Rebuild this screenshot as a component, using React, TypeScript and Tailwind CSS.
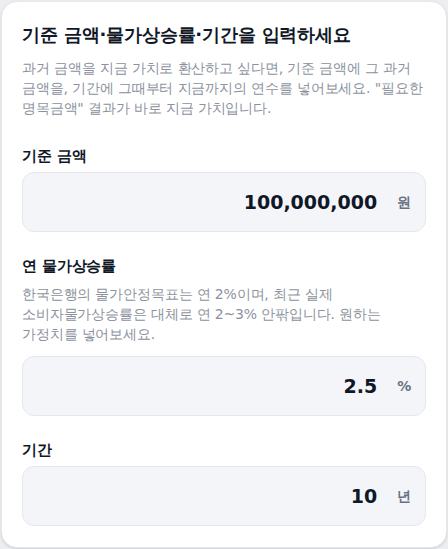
const font = { fontFamily: '"DejaVu Sans", sans-serif' };

type FieldProps = {
  label: string;
  hint?: string;
  value: string;
  unit: string;
};

function Field({ label, hint, value, unit }: FieldProps) {
  return (
    <div className="flex flex-col">
      <label className="text-[15px] leading-5 font-bold text-gray-900">{label}</label>
      {hint ? (
        <p className="mt-2 mb-3 text-[14px] leading-5 text-[#8b929d] break-keep pr-10">{hint}</p>
      ) : (
        <div className="h-1.5" />
      )}
      <div className="flex h-[60px] items-center justify-end gap-5 rounded-xl border border-gray-200 bg-[#f4f5f9] pr-[14px]">
        <span className="text-[19px] font-bold tracking-normal text-gray-900">{value}</span>
        <span className="text-[14px] font-semibold text-gray-500">{unit}</span>
      </div>
    </div>
  );
}

export default function App() {
  return (
    <div className="min-h-[549px] bg-[#eceef2] p-px tracking-[-0.01em]" style={font}>
      <div className="flex min-h-[547px] flex-col rounded-2xl border border-gray-200 bg-white px-5 pt-[19px] pb-5 shadow-sm">
        <h1 className="text-[18px] leading-7 font-bold text-gray-900">
          기준 금액·물가상승률·기간을 입력하세요
        </h1>
        <p className="mt-[9px] text-[14px] leading-5 text-[#8b929d] break-keep">
          과거 금액을 지금 가치로 환산하고 싶다면, 기준 금액에 그 과거 금액을, 기간에 그때부터 지금까지의 연수를 넣어보세요. "필요한 명목금액" 결과가 바로 지금 가치입니다.
        </p>
        <div className="mt-7 flex flex-col gap-6">
          <Field label="기준 금액" value="100,000,000" unit="원" />
          <Field
            label="연 물가상승률"
            hint="한국은행의 물가안정목표는 연 2%이며, 최근 실제 소비자물가상승률은 대체로 연 2~3% 안팎입니다. 원하는 가정치를 넣어보세요."
            value="2.5"
            unit="%"
          />
          <Field label="기간" value="10" unit="년" />
        </div>
      </div>
    </div>
  );
}
